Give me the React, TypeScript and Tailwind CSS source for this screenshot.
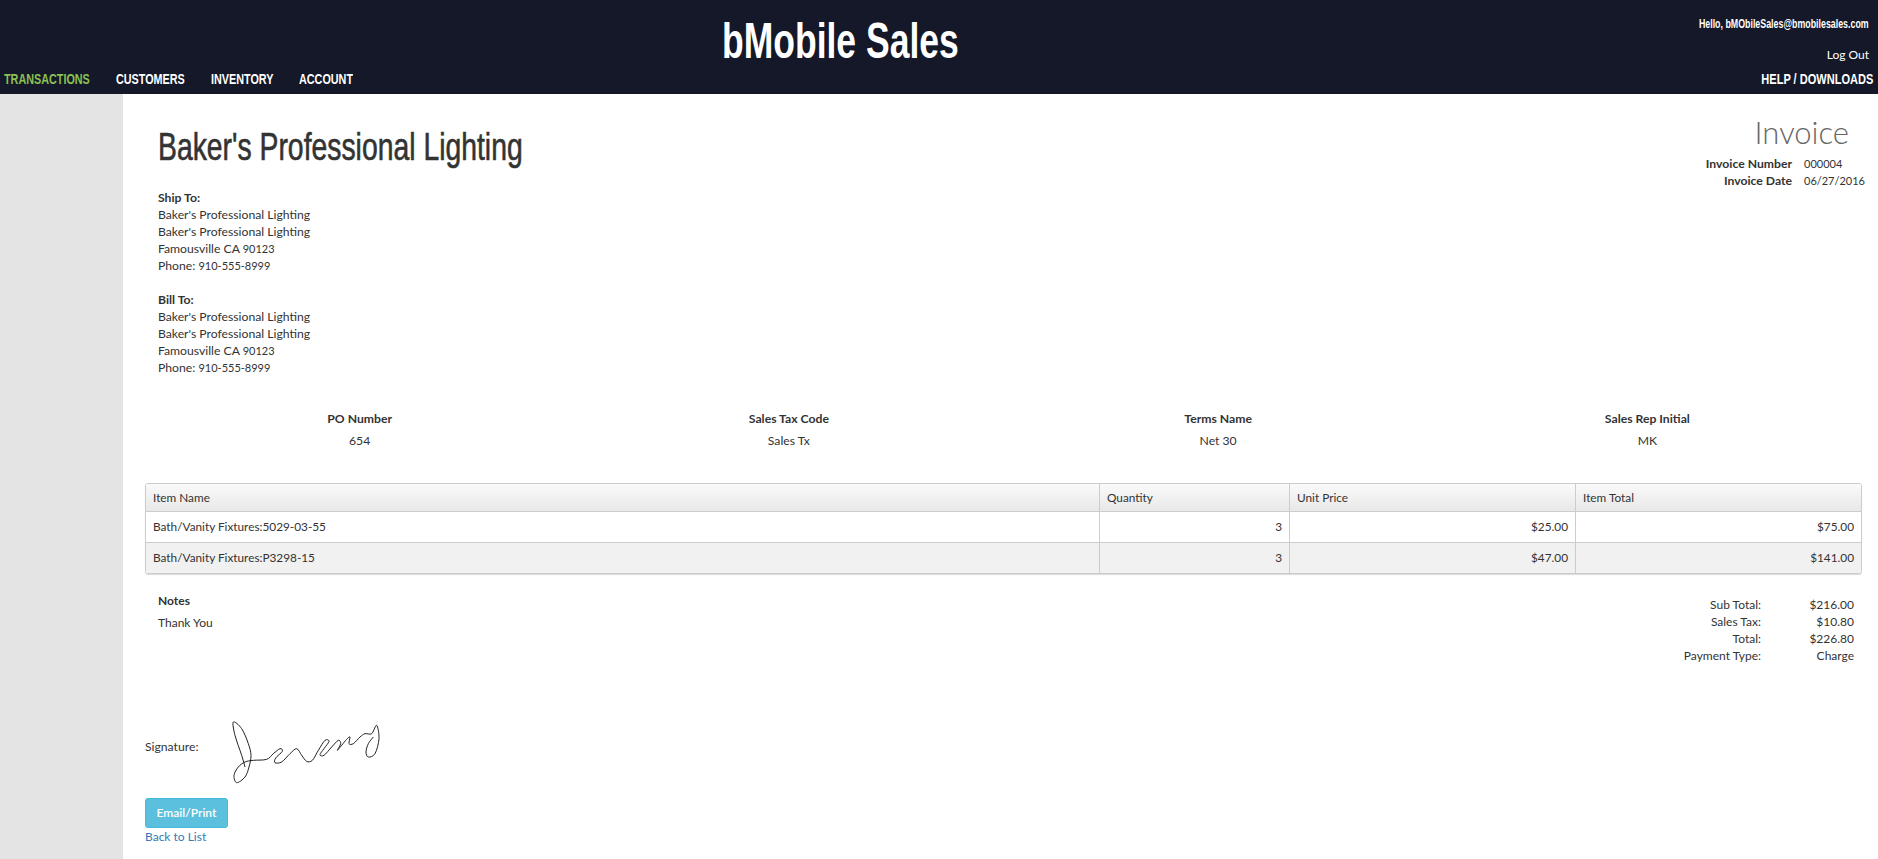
const sans = "font-['Lato','Liberation_Sans',sans-serif]";
const cond = "font-['Liberation_Sans','Arial',sans-serif]";

function Address({ title }: { title: string }) {
  return (
    <div className="leading-[17px] text-[#333]">
      <div className="font-bold">{title}</div>
      <div>Baker's Professional Lighting</div>
      <div>Baker's Professional Lighting</div>
      <div>Famousville CA <span className="text-[11px]">90123</span></div>
      <div>Phone: <span className="text-[11px]">910-555-8999</span></div>
    </div>
  );
}

const rows = [
  { n: "Bath/Vanity Fixtures:5029-03-55", q: "3", u: "$25.00", t: "$75.00", bg: "bg-white h-[31px] border-b border-[#ccc]" },
  { n: "Bath/Vanity Fixtures:P3298-15", q: "3", u: "$47.00", t: "$141.00", bg: "bg-[#f1f1f1] h-[30px]" },
];

const totals = [
  ["Sub Total:", "$216.00"],
  ["Sales Tax:", "$10.80"],
  ["Total:", "$226.80"],
  ["Payment Type:", "Charge"],
];

const sig: [number, number][] = [
  [60,165],[50,130],[30,70],[25,30],[50,50],[70,95],[78,130],[72,165],[60,195],[35,212],[27,190],[40,165],[60,150],[85,145],[125,142],
  [145,125],[165,110],[172,118],[152,138],[150,152],[170,150],[195,125],[215,110],[230,130],[245,148],[262,145],[280,115],[300,85],[312,88],[297,110],[285,128],[297,130],
  [320,105],[340,85],[347,95],[337,115],[350,100],[365,82],[375,75],[372,95],[385,95],[405,75],[420,65],[440,65],[455,40],[462,80],[450,125],[430,135],[423,120],[430,95],[445,75],
];

function smooth(p: [number, number][]) {
  let d = `M${p[0][0]} ${p[0][1]}`;
  for (let i = 0; i < p.length - 1; i++) {
    const a = p[Math.max(i - 1, 0)], b = p[i], c = p[i + 1], e = p[Math.min(i + 2, p.length - 1)];
    d += `C${b[0] + (c[0] - a[0]) / 6} ${b[1] + (c[1] - a[1]) / 6} ${c[0] - (e[0] - b[0]) / 6} ${c[1] - (e[1] - b[1]) / 6} ${c[0]} ${c[1]}`;
  }
  return d;
}

export default function App() {
  return (
    <div className={`${sans} w-[1878px] h-[859px] overflow-hidden flex flex-col bg-white text-[12.2px] text-[#333]`}>
      <header className="h-[94px] shrink-0 bg-[#141829] flex flex-col text-white">
        <div className="h-[59px] grid grid-cols-[722px_236px_1fr]">
          <div />
          <div className={`${cond} font-bold text-[50px] leading-[50px] pt-[16px] origin-left scale-x-[0.71] whitespace-nowrap`}>bMobile Sales</div>
          <div className="flex flex-col items-end pr-[9px]">
            <div className={`${cond} font-bold text-[13px] leading-4 pt-[16px] origin-right scale-x-[0.68] whitespace-nowrap`}>Hello, bMObileSales@bmobilesales.com</div>
            <div className="text-[12px] leading-4 pt-[15px]">Log Out</div>
          </div>
        </div>
        <nav className={`${cond} font-bold text-[15px] leading-5 flex items-center justify-between pl-[4px] pr-[5px] mt-[10px]`}>
          <div className="flex gap-[26px]">
            <div className="w-[86px]"><div className="origin-left scale-x-[0.72] whitespace-nowrap text-[#8cc152]">TRANSACTIONS</div></div>
            <div className="w-[69px]"><div className="origin-left scale-x-[0.72] whitespace-nowrap">CUSTOMERS</div></div>
            <div className="w-[62px]"><div className="origin-left scale-x-[0.72] whitespace-nowrap">INVENTORY</div></div>
            <div className="w-[54px]"><div className="origin-left scale-x-[0.72] whitespace-nowrap">ACCOUNT</div></div>
          </div>
          <div className="origin-right scale-x-[0.735] whitespace-nowrap">HELP / DOWNLOADS</div>
        </nav>
      </header>
      <div className="flex-1 flex min-h-0">
        <aside className="w-[123px] shrink-0 bg-[#e4e4e4]" />
        <main className="flex-1 pl-[22px] pr-[16px] flex flex-col">
          <div className="flex justify-between pl-[13px] -mr-[1px]">
            <div>
              <div className="w-[365px]">
                <h1 className={`${cond} font-normal [-webkit-text-stroke:0.6px_#333] text-[38px] leading-[44px] text-[#333] pt-[31px] origin-left scale-x-[0.746] whitespace-nowrap`}>Baker's Professional Lighting</h1>
              </div>
              <div className="mt-[20px]"><Address title="Ship To:" /></div>
              <div className="mt-[17px]"><Address title="Bill To:" /></div>
            </div>
            <div className="flex flex-col items-end">
              <div className="text-[31px] leading-[38px] font-light text-[#666] pt-[19px] pr-[14px]">Invoice</div>
              <div className="grid grid-cols-[auto_59px] gap-x-[12px] leading-[17px] mt-[4px]">
                <div className="font-bold text-right">Invoice Number</div><div className="text-[11px]">000004</div>
                <div className="font-bold text-right">Invoice Date</div><div className="text-[11px]">06/27/2016</div>
              </div>
            </div>
          </div>
          <div className="grid grid-cols-4 text-center mt-[34px]">
            {[["PO Number", "654"], ["Sales Tax Code", "Sales Tx"], ["Terms Name", "Net 30"], ["Sales Rep Initial", "MK"]].map(([a, b]) => (
              <div key={a}>
                <div className="font-bold leading-[17px]">{a}</div>
                <div className="leading-[17px] mt-[5px]">{b}</div>
              </div>
            ))}
          </div>
          <div className="mt-[34px] border border-[#ccc] rounded-[3px] shadow-[0_1px_1px_rgba(0,0,0,0.15)] overflow-hidden text-[11.8px]">
            <div className="grid grid-cols-[953px_190px_286px_1fr] h-[28px] border-b border-[#ccc] bg-gradient-to-b from-[#fafafa] to-[#e8e8e8]">
              {["Item Name", "Quantity", "Unit Price", "Item Total"].map((h, i) => (
                <div key={h} className={`px-[7px] flex items-center ${i ? "border-l border-[#ccc]" : ""}`}>{h}</div>
              ))}
            </div>
            {rows.map((r) => (
              <div key={r.n} className={`grid grid-cols-[953px_190px_286px_1fr] ${r.bg}`}>
                <div className="px-[7px] flex items-center">{r.n}</div>
                <div className="px-[7px] flex items-center justify-end border-l border-[#ccc]">{r.q}</div>
                <div className="px-[7px] flex items-center justify-end border-l border-[#ccc]">{r.u}</div>
                <div className="px-[7px] flex items-center justify-end border-l border-[#ccc]">{r.t}</div>
              </div>
            ))}
          </div>
          <div className="flex justify-between pl-[13px] pr-[8px] mt-[18px] text-[12px]">
            <div>
              <div className="font-bold leading-[17px]">Notes</div>
              <div className="leading-[17px] mt-[5px]">Thank You</div>
            </div>
            <div className="grid grid-cols-[auto_93px] leading-[17px] mt-[4px] text-right">
              {totals.map(([a, b]) => (
                <div key={a} className="contents"><div>{a}</div><div>{b}</div></div>
              ))}
            </div>
          </div>
          <div className="flex mt-[48px] h-[80px]">
            <span className="w-[80px] mt-[26px] leading-[17px]">Signature:</span>
            <svg width="165" height="80" viewBox="0 0 495 240" fill="none" stroke="#222" strokeWidth="3">
              <path d={smooth(sig)} />
            </svg>
          </div>
          <button className="mt-[6px] w-[83px] h-[30px] bg-[#5bc0de] border border-[#46b8da] rounded-[3px] text-white text-[12px] font-semibold text-center">Email/Print</button>
          <a className="text-[#337ab7] text-[12px] leading-[17px]">Back to List</a>
        </main>
      </div>
    </div>
  );
}
